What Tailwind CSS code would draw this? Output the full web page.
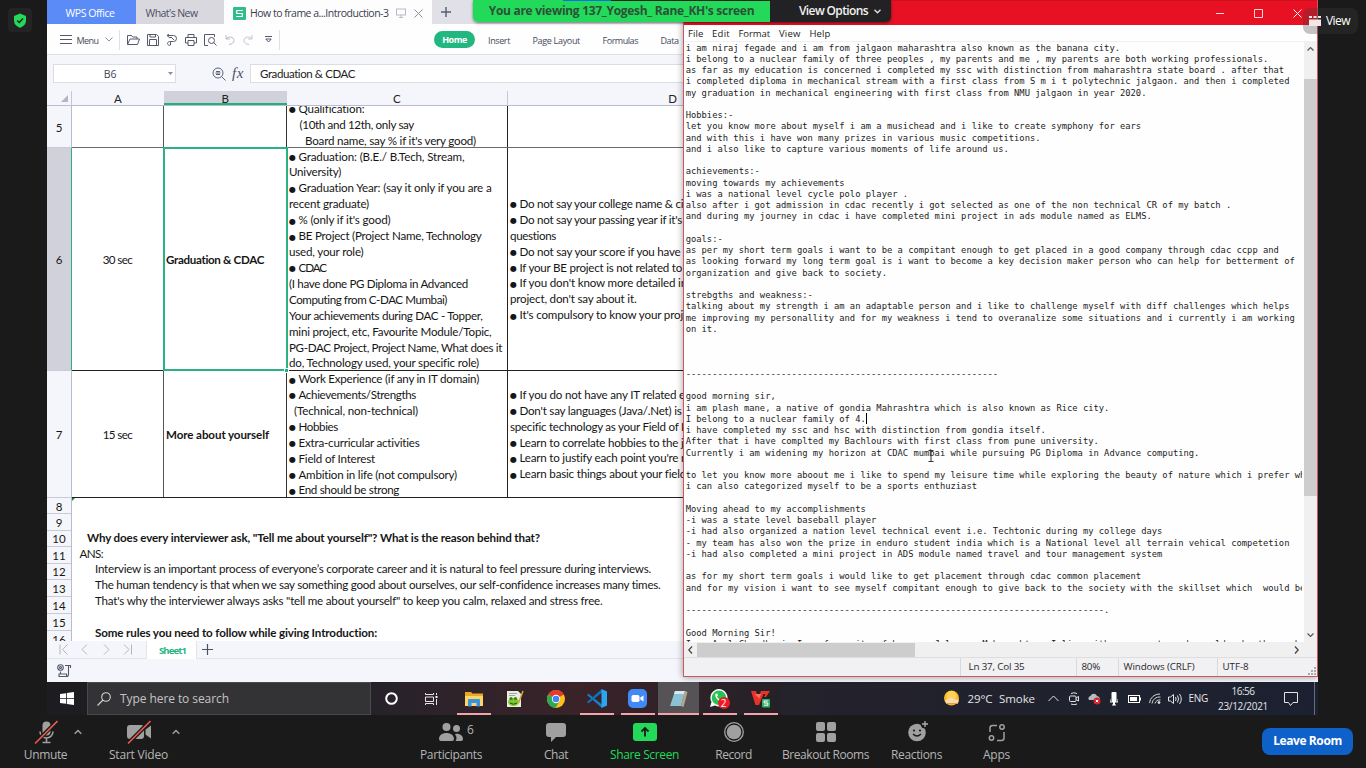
<!DOCTYPE html>
<html lang="en">
<head>
<meta charset="utf-8">
<title>Shared screen</title>
<script src="https://cdn.jsdelivr.net/npm/@tailwindcss/browser@4"></script>
</head>
<body class="w-[1366px] h-[768px] overflow-hidden bg-[#1a1a1a] font-['Open_Sans','Noto_Sans',sans-serif] flex flex-col">

<main class="relative flex h-[715px] shrink-0">
  <aside class="w-[47px] shrink-0 pt-2 pl-2">
    <div class="w-6 h-6 rounded bg-[#232323] flex items-center justify-center">
      <svg width="14" height="15" viewBox="0 0 14 15"><path d="M7 .5 13 3v4.500C13 11 10.500 13.500 7 14.800 3.500 13.500 1 11 1 7.500V3z" fill="#23d959"/><path d="M4.200 7.500 6.300 9.500 10 5.500" fill="none" stroke="#1a1a1a" stroke-width="1.400"/></svg>
    </div>
  </aside>

  <!-- shared desktop -->
  <section class="relative w-[1271px] h-[715px] shrink-0 overflow-hidden flex flex-col bg-[#dcdbe2]">

    <!-- spreadsheet window -->
    <div class="h-[682px] shrink-0 flex flex-col bg-[#f5f6fb] overflow-hidden">
      <div class="flex h-6 shrink-0 bg-[#e1e0e7] text-[10.500px] text-[#4b4f63]">
        <div class="w-[89px] bg-[#5b8bf7] text-white flex items-center pl-[18.500px] pt-[3px]"><span data-w="49">WPS Office</span></div>
        <div class="w-[88px] bg-[#dad8df] flex items-center pl-[9.500px] pt-[3px]"><span data-w="52">What's New</span></div>
        <div class="w-[208px] bg-[#fdfdfe] flex items-center pl-[9px] pt-0.5 text-[#3a3d4d]">
          <svg width="13" height="13" viewBox="0 0 13 13" class="shrink-0"><rect width="13" height="13" rx="1" fill="#2fbd8b"/><path d="M9.800 3.500H3.800v3h5.500v3H3.200" fill="none" stroke="#fff" stroke-width="1.200"/></svg>
          <span class="ml-1 pt-px" data-w="138.500">How to frame a...Introduction-3</span>
          <svg class="ml-[7.500px] shrink-0" width="10" height="10" viewBox="0 0 10 10" fill="none" stroke="#b7bac8"><rect x=".5" y="1" width="9" height="6"/><path d="M5 7v2M3 9.500h4"/></svg>
          <svg class="ml-2 shrink-0" width="9" height="9" viewBox="0 0 9 9" stroke="#8a8ea0"><path d="m.5.5 8 8m0-8-8 8"/></svg>
        </div>
        <div class="pl-[9px] flex items-center"><svg width="10" height="10" viewBox="0 0 10 10" stroke="#555d75" stroke-width="1.400"><path d="M5 0v10M0 5h10"/></svg></div>
      </div>

      <div class="flex items-center h-[31px] shrink-0 bg-[#fefefe] border-b border-[#dfe0e6] text-[9px] text-[#454a5c] pl-[13px] pt-px">
        <svg width="12" height="9" viewBox="0 0 12 9" stroke="#555a6b"><path d="M0 .5h12M0 4.500h12M0 8.500h12"/></svg>
        <span class="ml-[4.500px] pt-0.5" data-w="22">Menu</span>
        <svg class="ml-1.5" width="8" height="5" viewBox="0 0 8 5" fill="none" stroke="#8a8fa0"><path d="m.5.5 3.500 3.500L7.500.5"/></svg>
        <span class="ml-[6.500px] w-px h-5 bg-[#dfe0e6]"></span>
        <div class="ml-[7px] flex items-center gap-[7px]">
          <svg width="13" height="12" viewBox="0 0 13 12" fill="none" stroke="#555a6b"><path d="M.5 10.500v-9h4l1.200 1.500H10v2M.5 10.500 3 5h9.500l-2 5.500z"/></svg>
          <svg width="12" height="12" viewBox="0 0 12 12" fill="none" stroke="#555a6b"><path d="M.5.5h9l2 2v9H.5zM3 .5v2.500h5.500V.5M2.500 11.500v-6h7v6"/></svg>
          <svg width="12" height="12" viewBox="0 0 12 12" fill="none" stroke="#555a6b"><path d="M1 1.500h6.500a3 3 0 0 1 0 6H4.500V11a2 2 0 0 1-3-1.500C1.500 8 3 7.500 4.500 7.500M3 0l-2 1.500L4 4l1-1 3 3"/></svg>
          <svg width="12" height="12" viewBox="0 0 12 12" fill="none" stroke="#555a6b"><path d="M3 3.500v-3h6v3M3 9H.5V3.500h11V9H9M3 6.500h6v5H3z"/></svg>
          <svg width="13" height="12" viewBox="0 0 13 12" fill="none" stroke="#555a6b"><path d="M4 11.500H.5V.5h10v2.500"/><circle cx="7.500" cy="6.500" r="3"/><path d="m9.500 8.500 3 3"/></svg>
          <svg class="ml-px" width="10" height="10" viewBox="0 0 10 10" fill="none" stroke="#b9bcc8"><path d="M1 0v4h4M1 4c2-3 8-2.500 8 1.500C9 8 7 9 4 9.500"/></svg>
          <svg class="ml-px" width="10" height="10" viewBox="0 0 10 10" fill="none" stroke="#c4c7d1"><path d="M9 0v4H5M9 4C7 1 1 1.500 1 5.500 1 8 3 9 6 9.500"/></svg>
        </div>
        <svg class="ml-[12px]" width="7" height="7" viewBox="0 0 7 7" fill="none" stroke="#555a6b"><path d="M0 .5h7M.8 3l2.700 3 2.700-3z"/></svg>
        <span class="ml-[7px] w-px h-5 bg-[#dfe0e6]"></span>
        <div class="ml-[154px] w-[41px] h-[17px] rounded-full bg-[#22b781] text-white font-bold flex items-center justify-center"><span class="pt-px" data-w="24.500">Home</span></div>
        <span class="ml-[13px] pt-0.5" data-w="22">Insert</span>
        <span class="ml-[22.500px] pt-0.5" data-w="47.500">Page Layout</span>
        <span class="ml-[22.500px] pt-0.5" data-w="35.500">Formulas</span>
        <span class="ml-[22.500px] pt-0.5" data-w="18">Data</span>
      </div>

      <div class="flex items-center h-[36px] shrink-0 pl-1.5 pt-px">
        <div class="relative w-[123px] h-[19px] bg-white border border-[#dcdde4] flex items-center justify-center text-[10.500px] text-[#3f4455] pr-[9px] pt-[3px]">
          <span data-w="12.500">B6</span>
          <svg class="absolute right-[2px] top-[7px]" width="5" height="3"><path d="M0 0h5L2.500 3z" fill="#8a8fa0"/></svg>
        </div>
        <svg class="ml-[36px]" width="14" height="14" viewBox="0 0 14 14" fill="none" stroke="#5b6072"><circle cx="6" cy="6" r="5"/><path d="m9.500 9.500 4 4M3.500 6h5M4 4.500h4M4 7.500h4" /></svg>
        <span class="ml-1.5 font-['Liberation_Serif',serif] italic text-[15px] leading-none text-[#4b5062]" data-w="12">fx</span>
        <div class="ml-[6px] w-[440px] h-[19px] bg-white border border-[#dcdde4] flex items-center pl-[9px] pt-px font-[Lato,sans-serif] text-[11.500px] text-[#222]"><span data-w="95">Graduation &amp; CDAC</span></div>
      </div>

      <!-- column letters -->
      <div class="flex h-[15px] shrink-0 border-b border-[#b9bcd0] font-[Lato,sans-serif] text-[11.500px] leading-[15px] text-[#222] text-center">
        <div class="w-[25px] border-r border-[#c4c7d6] flex justify-end items-center pr-[3px]"><svg width="7" height="7"><path d="M7 0v7H0z" fill="#b4b6bd"/></svg></div>
        <div class="w-[92px]">A</div>
        <div class="w-[122.500px] bg-[#d0d1da] border-b-2 border-[#22b07d]">B</div>
        <div class="w-[221.500px] border-r border-[#c4c7d6]">C</div>
        <div class="w-[329px]">D</div>
      </div>

      <!-- grid -->
      <div class="relative flex h-[535px] shrink-0 overflow-hidden font-[Lato,sans-serif] text-[11.600px] leading-[15.920px] text-[#161616] [&_p]:w-max [&_p]:whitespace-pre [&_b]:inline-block [&_b]:w-[9.500px] [&_b]:text-[8px] [&_b]:font-normal [&_b]:align-[0.500px] [&_b]:font-['DejaVu_Sans',sans-serif] [&_b]:leading-none">
        <div class="w-[25px] shrink-0 flex flex-col border-r border-[#b9bcd0] text-center text-[11.500px] [&>div]:flex [&>div]:items-center [&>div]:justify-center [&>div]:border-b [&>div]:border-[#c9cbd8] [&>div]:shrink-0">
          <div class="h-[42px] pt-[3px]">5</div>
          <div class="h-[223px] pt-0.5 bg-[#d0d1da]">6</div>
          <div class="h-[127px] pt-0.5">7</div>
          <div class="h-[16px] pt-0.5">8</div>
          <div class="h-[16.500px] pt-0.5">9</div>
          <div class="h-[16.500px] pt-0.5">10</div>
          <div class="h-[16.500px] pt-0.5">11</div>
          <div class="h-[16.500px] pt-0.5">12</div>
          <div class="h-[17px] pt-0.5">13</div>
          <div class="h-[17px] pt-0.5">14</div>
          <div class="h-[17px] pt-0.5">15</div>
          <div class="h-[17px] pt-0.5">16</div>
        </div>
        <div class="w-[1246px] shrink-0 bg-white flex flex-col">
          <div class="flex h-[42px] shrink-0 border-b border-[#6b6b6b]">
            <div class="w-[92px] border-r border-[#555]"></div>
            <div class="w-[123px] border-r border-[#333]"></div>
            <div class="w-[221px] border-r border-[#222] flex flex-col justify-end pl-[2px] overflow-hidden">
              <p data-w="75.500"><b>●</b>Qualification:</p>
              <p class="ml-[10.500px]" data-w="114.500">(10th and 12th, only say</p>
              <p class="ml-[16px] -mb-[1.600px]" data-w="171">Board name, say % if it's very good)</p>
            </div>
          </div>
          <div class="flex h-[223px] shrink-0 border-b border-[#222]">
            <div class="w-[92px] border-r border-[#555] flex items-center justify-center pt-px"><p data-w="29.500">30 sec</p></div>
            <div class="relative w-[123px] border-r border-[#333] flex items-center pl-[2px] pt-px font-bold">
              <p data-w="98">Graduation &amp; CDAC</p>
              <div class="absolute -left-[1.500px] -top-px w-[125px] h-[224px] border-2 border-[#2bb184]"></div>
              <div class="absolute -right-[2px] -bottom-[2px] w-[3px] h-[3px] bg-[#22b07d] outline outline-white"></div>
            </div>
            <div class="w-[221px] border-r border-[#222] pl-[2px] pt-[0.500px] overflow-hidden">
              <p data-w="175.500"><b>●</b>Graduation: (B.E./ B.Tech, Stream,</p>
              <p data-w="52">University)</p>
              <p data-w="202.500"><b>●</b>Graduation Year: (say it only if you are a</p>
              <p data-w="80">recent graduate)</p>
              <p data-w="101.500"><b>●</b>% (only if it's good)</p>
              <p data-w="192.500"><b>●</b>BE Project (Project Name, Technology</p>
              <p data-w="74.500">used, your role)</p>
              <p data-w="37"><b>●</b>CDAC</p>
              <p data-w="179">(I have done PG Diploma in Advanced</p>
              <p data-w="158">Computing from C-DAC Mumbai)</p>
              <p data-w="193.500">Your achievements during DAC - Topper,</p>
              <p data-w="202.500">mini project, etc, Favourite Module/Topic,</p>
              <p data-w="213">PG-DAC Project, Project Name, What does it</p>
              <p data-w="190">do, Technology used, your specific role)</p>
            </div>
            <div class="w-[400px] pl-[2px] flex flex-col justify-center pt-px">
              <p data-w="183"><b>●</b>Do not say your college name &amp; city</p>
              <p data-w="172"><b>●</b>Do not say your passing year if it's</p>
              <p data-w="46">questions</p>
              <p data-w="170.500"><b>●</b>Do not say your score if you have</p>
              <p data-w="172"><b>●</b>If your BE project is not related to</p>
              <p data-w="177"><b>●</b>If you don't know more detailed in</p>
              <p data-w="126.500">project, don't say about it.</p>
              <p data-w="173"><b>●</b>It's compulsory to know your proj</p>
            </div>
          </div>
          <div class="flex h-[127px] shrink-0 border-b border-[#222]">
            <div class="w-[92px] border-r border-[#555] flex items-center justify-center pt-px"><p data-w="29.500">15 sec</p></div>
            <div class="w-[123px] border-r border-[#333] flex items-center pl-[2px] pt-px font-bold"><p data-w="103">More about yourself</p></div>
            <div class="w-[221px] border-r border-[#222] pl-[2px] overflow-hidden">
              <p data-w="190"><b>●</b>Work Experience (if any in IT domain)</p>
              <p data-w="127"><b>●</b>Achievements/Strengths</p>
              <p class="ml-[5px]" data-w="124">(Technical, non-technical)</p>
              <p data-w="49"><b>●</b>Hobbies</p>
              <p data-w="130.500"><b>●</b>Extra-curricular activities</p>
              <p data-w="86"><b>●</b>Field of Interest</p>
              <p data-w="168"><b>●</b>Ambition in life (not compulsory)</p>
              <p data-w="110"><b>●</b>End should be strong</p>
            </div>
            <div class="w-[400px] pl-[2px] flex flex-col justify-center pt-px">
              <p data-w="175"><b>●</b>If you do not have any IT related e</p>
              <p data-w="171.500"><b>●</b>Don't say languages (Java/.Net) is</p>
              <p data-w="174">specific technology as your Field of I</p>
              <p data-w="173.500"><b>●</b>Learn to correlate hobbies to the j</p>
              <p data-w="175"><b>●</b>Learn to justify each point you're r</p>
              <p data-w="176"><b>●</b>Learn basic things about your field</p>
            </div>
          </div>
          <div class="pt-[31.600px]">
            <p class="font-bold ml-[15px]" data-w="453">Why does every interviewer ask, "Tell me about yourself"? What is the reason behind that?</p>
            <p class="ml-[7.500px]" data-w="23.500">ANS:</p>
            <p class="ml-[23px]" data-w="556">Interview is an important process of everyone’s corporate career and it is natural to feel pressure during interviews.</p>
            <p class="ml-[23px]" data-w="565.500">The human tendency is that when we say something good about ourselves, our self-confidence increases many times.</p>
            <p class="ml-[23px]" data-w="507.500">That's why the interviewer always asks "tell me about yourself" to keep you calm, relaxed and stress free.</p>
            <p class="ml-[23px] mt-[15.600px] font-bold" data-w="282">Some rules you need to follow while giving Introduction:</p>
          </div>
        </div>
        <svg class="absolute left-[25px] top-[392px]" width="3" height="3"><path d="M0 0h3L0 3z" fill="#178a2b"/></svg>
        <div class="absolute left-[24px] top-[42px] w-px h-[222px] bg-[#2bb184]"></div>
      </div>

      <!-- sheet tabs -->
      <div class="flex h-[18px] shrink-0 items-center bg-[#f5f6fb] border-b border-[#e3e4ea] pl-3">
        <svg width="74" height="11" viewBox="0 0 74 11" fill="none" stroke="#b3b6c2"><path d="M1 .5v10M8.500.5l-5 5 5 5M28 .5l-5 5 5 5M45 .5l5 5-5 5M65 .5l5 5-5 5M72.500.5v10"/></svg>
        <div class="ml-[12.500px] w-[51px] h-[18px] bg-white border-x border-[#e3e4ea] flex items-center justify-center pt-[4px] pl-[3px] text-[9.500px] font-bold text-[#22b781]"><span data-w="27">Sheet1</span></div>
        <svg class="ml-[5px]" width="11" height="11" stroke="#4b5062" stroke-width="1.200"><path d="M5.500 0v11M0 5.500h11"/></svg>
      </div>
      <div class="flex h-[23px] shrink-0 items-center pl-[10px]">
        <svg width="15" height="14" viewBox="0 0 15 14" fill="none" stroke="#555a6b" stroke-width="1.100"><circle cx="3.500" cy="3.500" r="2.800"/><circle cx="3.500" cy="3.500" r="1"/><path d="M8 1.500h5.500v2.500M11.500 1.500v9q0 2-2 2H2v-2.500h7.500V12M3.500 7.500V10"/></svg>
      </div>
    </div>

    <!-- Windows taskbar -->
    <div class="flex h-[33px] shrink-0 bg-linear-to-r from-[#1c1c21] via-[#26222a] to-[#1b2131] text-[#e4e4e6]">
      <div class="w-[40px] flex items-center justify-center"><svg width="14" height="13" viewBox="0 0 14 13" fill="#fff"><path d="M0 2 6 1.200V6H0zM6.800 1 14 0v6H6.800zM0 6.800h6v5L0 11zM6.800 6.800H14V13l-7.200-1z"/></svg></div>
      <div class="w-[284px] bg-[#333335] border border-[#4a4a4c] flex items-center pl-[9px] text-[12px] text-[#c4c4c6]">
        <svg width="14" height="14" viewBox="0 0 14 14" fill="none" stroke="#d4d4d6" stroke-width="1.100"><circle cx="9" cy="5" r="4.300"/><path d="M6 8 .5 13.500"/></svg>
        <span class="ml-[9px]" data-w="109">Type here to search</span>
      </div>
      <div class="flex [&>div]:w-[41px] [&>div]:h-[33px] [&>div]:flex [&>div]:items-center [&>div]:justify-center [&>div]:relative bg-linear-to-r from-[#26222a] via-[#3a2329] to-[#242127]">
        <div><svg width="13" height="13"><circle cx="6.500" cy="6.500" r="5.300" fill="none" stroke="#fff" stroke-width="2"/></svg></div>
        <div class="pr-0.5"><svg width="15" height="12" viewBox="0 0 15 12" fill="none" stroke="#e4e4e6"><path d="M1.500 0v1.500h8V0M1.500 4h8v4.500h-8zM1.500 12v-1.500h8V12M12.500 0v2M12.500 6v6"/><rect x="11.500" y="3" width="2" height="2" fill="#fff" stroke="none"/></svg></div>
        <div><svg width="18" height="16" viewBox="0 0 18 16"><path d="M0 1h6l1.500 1.500H18V15H0z" fill="#e9a820"/><path d="M0 5h18v10H0z" fill="#fcd66b"/><path d="M3 15.500V9q0-1 1-1h10q1 0 1 1v6.500h-3.500V12h-5v3.500z" fill="#3a93e0"/></svg><i class="absolute bottom-0 left-[4px] w-[34px] h-[2px] bg-[#f3a3ab]"></i></div>
        <div><svg width="18" height="18" viewBox="0 0 18 18"><path d="M1 1h11l3 3v13H1z" fill="#e9efdf"/><path d="M3 3.500h8M3 5.500h6" stroke="#9aa"/><ellipse cx="7.500" cy="12" rx="5.500" ry="4" fill="#7dc82f"/><circle cx="5" cy="8.500" r="1.600" fill="#3f7d18"/><circle cx="9.500" cy="8.500" r="1.600" fill="#3f7d18"/><path d="M4 13q3.500 2.500 7 0" stroke="#265010" fill="none"/><path d="m17 1-4.500 12" stroke="#d9a43a" stroke-width="1.600"/></svg></div>
        <div><svg width="18" height="18" viewBox="0 0 18 18"><circle cx="9" cy="9" r="9" fill="#fbc116"/><path d="M9 9 1.200 4.500A9 9 0 0 1 16.800 4.500z" fill="#e33b2e"/><path d="M9 9 1.200 4.500A9 9 0 0 0 8.500 18L12.500 11z" fill="#2da94f"/><path d="M9 5h8.100a9 9 0 0 0-.3-.5H9z" fill="#e33b2e"/><circle cx="9" cy="9" r="4.200" fill="#fff"/><circle cx="9" cy="9" r="3.300" fill="#4285f4"/></svg></div>
        <div><svg width="20" height="19" viewBox="0 0 20 19"><path d="m0 6 1.500-1.200L15 15.500v3.500z" fill="#1380cf"/><path d="m0 13 1.500 1.200L15 3.500V0z" fill="#0d73bf"/><path d="m14.500 0 5.500 2.500v14L14.500 19z" fill="#2ba5ee"/></svg><i class="absolute bottom-0 left-[4px] w-[34px] h-[2px] bg-[#f3a3ab]"></i></div>
        <div><svg width="19" height="19" viewBox="0 0 19 19"><rect width="19" height="19" rx="5" fill="#4289f5"/><rect x="3.500" y="6" width="8" height="7" rx="1.800" fill="#fff"/><path d="m12.300 8.500 3.200-2v6l-3.200-2z" fill="#fff"/></svg><i class="absolute bottom-0 left-[4px] w-[34px] h-[2px] bg-[#f3a3ab]"></i></div>
        <div class="bg-[#555356]"><svg width="19" height="18" viewBox="0 0 19 18"><path d="M6 1h10L12 16H1z" fill="#8cc3d4"/><path d="M6 1h10l-1 3H5z" fill="#d7e9ee"/><path d="m16 1 2.500 1L14.500 17 12 16z" fill="#b9a58a"/></svg><i class="absolute bottom-0 left-0 w-[41px] h-[2px] bg-[#f3a3ab]"></i></div>
        <div><svg width="20" height="20" viewBox="0 0 20 20"><path d="M9 0a8.700 8.700 0 1 1-4 16.500L0 18l1.500-5A8.700 8.700 0 0 1 9 0z" fill="#fff"/><circle cx="9" cy="8.800" r="7.300" fill="#27c155"/><path d="M6 4.500c-1.500 1-.5 4 1.500 6s4 3 5.500 2l.3-1.500-2-1.200-1 1C9 10.500 7.500 9 7 7.500l1-1L7.300 4.500z" fill="#fff"/><circle cx="14" cy="14" r="6" fill="#ed1c24"/></svg><span class="absolute left-[18.500px] top-[13.500px] w-[12px] text-center text-[10px] leading-[14px] text-white">2</span><i class="absolute bottom-0 left-[4px] w-[34px] h-[2px] bg-[#f3a3ab]"></i></div>
        <div><svg width="19" height="18" viewBox="0 0 19 18"><path d="M0 1h5l2 8 3-8h9l-4 6h-2l1.500-3h-2L8 15H4.500z" fill="#e8332a"/><path d="M4 4h6l-2 5z" fill="#ff6d5e"/><rect x="11" y="9" width="8" height="8.500" rx="1" fill="#35b26a"/><path d="M16.800 11h-3.600v2h3.600v2.200h-3.800" fill="none" stroke="#fff"/></svg><i class="absolute bottom-0 left-[4px] w-[34px] h-[2px] bg-[#f3a3ab]"></i></div>
      </div>
      <div class="flex items-center ml-[162px] text-[11.500px] shrink-0">
        <svg width="17" height="17" viewBox="0 0 17 17"><circle cx="8.500" cy="8" r="7.500" fill="#f9b824"/><circle cx="8.500" cy="6" r="5" fill="#fdd257"/><path d="M2 12a3 3 0 0 1 4-3q3-2.500 5 .5h4.500q1 3-2 4H5z" fill="#f5ddb0"/><path d="M3 13.500h12" stroke="#e99a3a"/></svg>
        <span class="ml-[7.500px] pt-px" data-w="25">29°C</span><span class="ml-[6.500px] pt-px" data-w="36">Smoke</span>
        <svg class="ml-[13px]" width="11" height="7" viewBox="0 0 11 7" fill="none" stroke="#e4e4e6"><path d="M.5 6 5.500 1l5 5"/></svg>
        <svg class="ml-[10px]" width="11" height="13" viewBox="0 0 11 13" fill="none" stroke="#e4e4e6"><rect x=".5" y="4" width="6.500" height="5.500" rx="1"/><path d="m7 6 2.500-1.500v4.500L7 7.500M2 1.500q3-1.500 6 0M2 12q3 1.500 6 0"/></svg>
        <svg class="ml-2" width="13" height="13" viewBox="0 0 13 13"><path d="M1 8a2.500 2.500 0 0 1 1.500-4 3.500 3.500 0 0 1 6.500 0q3 .5 3 4z" fill="#b9bac0"/><circle cx="9" cy="9" r="3.500" fill="#d5222e"/><path d="m7.800 7.800 2.400 2.400m0-2.400-2.400 2.400" stroke="#fff"/></svg>
        <svg class="ml-[9px]" width="8" height="14" viewBox="0 0 8 14"><rect x="1.500" width="5" height="10" rx="1" fill="#fff"/><path d="M0 7v3h3.500v3M8 7v3H4.500v3M2 13h4" fill="none" stroke="#fff"/></svg>
        <svg class="ml-[10px]" width="13" height="8" viewBox="0 0 13 8"><rect x=".5" y=".5" width="11" height="7" fill="none" stroke="#fff"/><path d="M2 2h7v4H2zM12 2.500h1v3h-1z" fill="#fff"/></svg>
        <svg class="ml-[8px]" width="12" height="11" viewBox="0 0 12 11" fill="none" stroke="#d4d4d8"><path d="M.5 10A10 10 0 0 1 11 1M3 10.500A7.500 7.500 0 0 1 11.500 4M6 10.500A5 5 0 0 1 11.500 7"/><circle cx="10" cy="9.500" r="1" fill="#fff"/></svg>
        <svg class="ml-[6.500px]" width="14" height="12" viewBox="0 0 14 12" fill="none" stroke="#e4e4e6"><path d="M.5 4h2L5.500 1.500v9L2.500 8h-2zM7.500 4q1.200 2 0 4M9.500 2.500q2 3.500 0 7M11.500 1q3.500 5 0 10"/></svg>
        <span class="ml-[7px] text-[10px]" data-w="19.500">ENG</span>
        <div class="ml-[10px] flex flex-col items-center text-[10px] leading-[15px]"><span data-w="23">16:56</span><span data-w="50">23/12/2021</span></div>
        <svg class="ml-[15.500px]" width="14" height="14" viewBox="0 0 14 14" fill="none" stroke="#e4e4e6"><path d="M.5.5h13v10H9l-2.500 3-2-3h-4z"/></svg>
      </div>
      <div class="ml-auto mr-[3px] w-px bg-[#6b6e78]"></div>
    </div>

    <!-- Notepad window -->
    <div class="absolute left-[635.500px] top-0 w-[635.500px] h-[677px] border-x border-b border-[#cf5560] bg-[#fefefe] shadow-[0_0_7px_rgba(0,0,0,.4)] flex flex-col">
      <div class="h-[25px] shrink-0 bg-[#e81123] border-t border-[#cf1020] flex items-center justify-end pr-[15px] gap-[30px]">
        <svg width="8" height="9"><path d="M0 4.500h8" stroke="#fbd5d8"/></svg>
        <svg width="9" height="9"><path d="M.5.5h8v8h-8z" fill="none" stroke="#fbd5d8"/></svg>
        <svg width="9" height="9"><path d="m.5.5 8 8m0-8-8 8" stroke="#fff"/></svg>
      </div>
      <div class="h-[17px] shrink-0 flex items-center pl-[4.500px] pt-0.5 text-[9.500px] text-[#222] border-b border-[#f0f0f0]">
        <span data-w="15.500">File</span><span class="ml-[8.500px]" data-w="18">Edit</span><span class="ml-[8.500px]" data-w="31.500">Format</span><span class="ml-[9px]" data-w="21.500">View</span><span class="ml-[9px]" data-w="21">Help</span>
      </div>
      <div class="flex h-[600px] shrink-0">
        <div class="relative w-[618px] mr-[2.500px] shrink-0 overflow-hidden">
<pre class="pl-[2.200px] pt-[0.500px] font-['DejaVu_Sans_Mono',monospace] text-[8.800px] leading-[11.250px] text-[#1c1c1c]">i am niraj fegade and i am from jalgaon maharashtra also known as the banana city.
i belong to a nuclear family of three peoples , my parents and me , my parents are both working professionals.
as far as my education is concerned i completed my ssc with distinction from maharashtra state board . after that
i completed diploma in mechanical stream with a first class from S m i t polytechnic jalgaon. and then i completed
my graduation in mechanical engineering with first class from NMU jalgaon in year 2020.

Hobbies:-
let you know more about myself i am a musichead and i like to create symphony for ears
and with this i have won many prizes in various music competitions.
and i also like to capture various moments of life around us.

achievements:-
moving towards my achievements
i was a national level cycle polo player .
also after i got admission in cdac recently i got selected as one of the non technical CR of my batch .
and during my journey in cdac i have completed mini project in ads module named as ELMS.

goals:-
as per my short term goals i want to be a compitant enough to get placed in a good company through cdac ccpp and
as looking forward my long term goal is i want to become a key decision maker person who can help for betterment of
organization and give back to society.

strebgths and weakness:-
talking about my strength i am an adaptable person and i like to challenge myself with diff challenges which helps
me improving my personallity and for my weakness i tend to overanalize some situations and i currently i am working
on it.



-----------------------------------------------------------

good morning sir,
i am plash mane, a native of gondia Mahrashtra which is also known as Rice city.
I belong to a nuclear family of 4.
i have completed my ssc and hsc with distinction from gondia itself.
After that i have complted my Bachlours with first class from pune university.
Currently i am widening my horizon at CDAC mumbai while pursuing PG Diploma in Advance computing.

to let you know more aboout me i like to spend my leisure time while exploring the beauty of nature which i prefer wh
i can also categorized myself to be a sports enthuziast

Moving ahead to my accomplishments
-i was a state level baseball player
-i had also organized a nation level technical event i.e. Techtonic during my college days
- my team has also won the prize in enduro student india which is a National level all terrain vehical competetion
-i had also completed a mini project in ADS module named travel and tour management system

as for my short term goals i would like to get placement through cdac common placement
and for my vision i want to see myself compitant enough to give back to the society with the skillset which  would be

-------------------------------------------------------------------------------.

Good Morning Sir!
I am Amol Chaudhari. I am from city of bananas Jalgaon, Maharashtra. I live with my parents and an elder brother, wh</pre>
          <div class="absolute left-[182px] top-[371px] w-px h-[11px] bg-black"></div>
          <svg class="absolute left-[244px] top-[408px]" width="6" height="12" fill="none" stroke="#333"><path d="M.5.5h5M3 .5v11M.5 11.500h5"/></svg>
        </div>
        <div class="w-[13px] shrink-0 bg-[#f0f0f0] flex flex-col items-center">
          <svg class="mt-1 shrink-0" width="7" height="6" fill="none" stroke="#555" stroke-width="1.200"><path d="m.5 4.500 3-3 3 3"/></svg>
          <div class="mt-[27px] w-full h-[417px] shrink-0 bg-[#cdcdcd]"></div>
          <svg class="mt-auto mb-1 shrink-0" width="7" height="6" fill="none" stroke="#555" stroke-width="1.200"><path d="m.5 1.500 3 3 3-3"/></svg>
        </div>
      </div>
      <div class="h-[15px] shrink-0 bg-[#f0f0f0] flex items-center pl-1">
        <svg width="5" height="8" fill="none" stroke="#444" stroke-width="1.300"><path d="M4 .5.8 4 4 7.500"/></svg>
        <div class="ml-[4px] w-[218px] h-[14px] bg-[#cdcdcd]"></div>
        <svg class="ml-auto mr-[18px]" width="5" height="8" fill="none" stroke="#444" stroke-width="1.300"><path d="M1 .5 4.200 4 1 7.500"/></svg>
      </div>
      <div class="relative grow bg-[#f1f0f2] border-t border-[#dedede] flex items-stretch text-[9.800px] text-[#2a2a2a] [&>div]:border-l [&>div]:border-[#d9d9d9] [&>div]:flex [&>div]:items-center [&>div]:pt-px">
        <div class="ml-[276px] w-[116px] pl-[8px]"><span data-w="56">Ln 37, Col 35</span></div>
        <div class="w-[42px] pl-[5px]"><span data-w="18.500">80%</span></div>
        <div class="w-[99px] pl-[5px]"><span data-w="71">Windows (CRLF)</span></div>
        <div class="w-[98px] pl-[5px]"><span data-w="26">UTF-8</span></div>
        <svg class="absolute right-[1px] bottom-[1px]" width="8" height="8" fill="#aaa"><path d="M6 0h2v2H6zM3 3h2v2H3zM6 3h2v2H6zM0 6h2v2H0zM3 6h2v2H3zM6 6h2v2H6z"/></svg>
      </div>
    </div>
  </section>

  <!-- meeting overlays -->
  <div class="absolute left-[473px] top-0 w-[418px] h-[22px] rounded-b-[5px] overflow-hidden flex shadow-[0_1px_3px_rgba(0,0,0,.5)] font-bold text-[12px]">
    <div class="w-[297px] bg-[#23d959] flex items-center justify-center text-[#2c5138]"><span data-w="265.500">You are viewing 137_Yogesh_ Rane_KH's screen</span></div>
    <div class="grow bg-[#222224] text-[#f2f2f2] flex items-center pl-[29px] font-semibold"><span data-w="69">View Options</span><svg class="ml-[6px]" width="7" height="5" fill="none" stroke="#ddd" stroke-width="1.400"><path d="m.5.7 3 3 3-3"/></svg></div>
    <div class="absolute left-[90px] top-0 w-[48px] h-px bg-[#0e71eb]"></div>
    <div class="absolute left-[138px] top-0 w-[280px] h-px bg-[#222]"></div>
  </div>
  <div class="absolute left-[1303px] top-[8px] w-[55px] h-[26px] rounded-[7px] bg-[#3c3c3c]/30 flex items-center pl-[6px] text-white text-[12px]">
    <svg width="12" height="12" viewBox="0 0 12 12" fill="#f3e6e6"><path d="M0 1h3v2H0zM4.500 1h3v2h-3zM9 1h3v2H9zM0 4.500h12V11H0z"/></svg>
    <span class="ml-[5px]" data-w="24">View</span>
  </div>
</main>

<!-- meeting controls -->
<footer class="relative flex h-[53px] shrink-0 text-[12px] text-[#b5b5b5] [&>div]:flex [&>div]:flex-col [&>div]:items-center [&>div]:shrink-0 [&>div>svg]:h-[26px] [&>div>svg]:mt-[5px] [&>div>span]:leading-[16px] [&>div>span]:mt-[1px]">
  <div class="w-[91px]"><svg width="24" viewBox="0 0 24 26"><rect x="8.500" y="1.500" width="8" height="14" rx="4" fill="#a0a0a0"/><path d="M6 11.500a6.500 6.500 0 0 0 13 0M12.500 18v4M8.500 22.500h8" fill="none" stroke="#a0a0a0" stroke-width="1.600"/><path d="M1 23 23.500 1" stroke="#1a1a1a" stroke-width="4"/><path d="M1 23.500 23.500 1" stroke="#ee5a52" stroke-width="1.600"/></svg><span data-w="43.500">Unmute</span></div>
  <div class="w-[95px]"><svg width="26" viewBox="0 0 26 26"><rect x="1" y="5" width="17" height="14" rx="3" fill="#a0a0a0"/><path d="m19.500 9.500 5.500-4v13l-5.500-4z" fill="#a0a0a0"/><path d="M2 23.500 24.500 1" stroke="#1a1a1a" stroke-width="4"/><path d="M2 23.500 24.500 1" stroke="#ee5a52" stroke-width="1.600"/></svg><span data-w="59">Start Video</span></div>
  <div class="ml-[215px] w-[100px] relative"><svg width="26" viewBox="0 0 26 26" fill="#a0a0a0"><circle cx="8.500" cy="7" r="4"/><circle cx="18.500" cy="8.500" r="3.500"/><path d="M1 19c0-8 15-8 15 0q0 2-2 2H3q-2 0-2-2zM17.500 21h5.500q2 0 2-1.800c0-4-4-6.500-8-5.200q2 2.500 1.300 5.500z"/></svg><span data-w="62">Participants</span><em class="absolute left-[66px] top-[7px] not-italic text-[12px] leading-4">6</em></div>
  <div class="w-[110px]"><svg width="22" viewBox="0 0 22 26"><path d="M4 3h14q3 0 3 3v8q0 3-3 3h-7l-5 5v-5H4q-3 0-3-3V6q0-3 3-3z" fill="#a0a0a0"/></svg><span data-w="24">Chat</span></div>
  <div class="w-[67px] text-[#23d959]"><svg width="24" viewBox="0 0 24 26"><rect y="3" width="24" height="18" rx="3" fill="#23d959"/><path d="M12 16.500V8.500M8.500 11.500 12 8l3.500 3.500" fill="none" stroke="#1a1a1a" stroke-width="1.800"/></svg><span data-w="69">Share Screen</span></div>
  <div class="w-[111px]"><svg width="22" viewBox="0 0 22 26"><circle cx="11" cy="12" r="9.300" fill="none" stroke="#a0a0a0" stroke-width="1.300"/><circle cx="11" cy="12" r="7.300" fill="#a0a0a0"/></svg><span data-w="36.500">Record</span></div>
  <div class="w-[73px]"><svg width="22" viewBox="0 0 22 26" fill="#a0a0a0"><rect x="1" y="2" width="9" height="9" rx="2"/><rect x="12" y="2" width="9" height="9" rx="2"/><rect x="1" y="13" width="9" height="9" rx="2"/><rect x="12" y="13" width="9" height="9" rx="2"/></svg><span data-w="87">Breakout Rooms</span></div>
  <div class="w-[109px]"><svg width="24" viewBox="0 0 24 26"><circle cx="12" cy="12.500" r="8.800" fill="#a0a0a0"/><circle cx="20" cy="4" r="4.500" fill="#1a1a1a"/><path d="M20 1v6M17 4h6" stroke="#b0b0b0" stroke-width="1.300"/><circle cx="9" cy="10.500" r="1.100" fill="#1a1a1a"/><circle cx="15" cy="10.500" r="1.100" fill="#1a1a1a"/><path d="M8 14q4 4 8 0" fill="none" stroke="#1a1a1a" stroke-width="1.400"/></svg><span data-w="51">Reactions</span></div>
  <div class="w-[51px]"><svg width="18" viewBox="0 0 18 26" fill="none" stroke="#a0a0a0" stroke-width="1.500"><path d="M2 12V8q0-2.500 2.500-2.500H9M16 12v6q0 2.500-2.500 2.500H9"/><circle cx="14" cy="7" r="2.200"/><circle cx="3.500" cy="18" r="2.200"/></svg><span data-w="27">Apps</span></div>
  <svg class="absolute left-[74px] top-[14px]" width="8" height="6" fill="none" stroke="#a0a0a0" stroke-width="1.500"><path d="m.7 4.700 3.300-3.200 3.300 3.200"/></svg>
  <svg class="absolute left-[172px] top-[14px]" width="8" height="6" fill="none" stroke="#a0a0a0" stroke-width="1.500"><path d="m.7 4.700 3.300-3.200 3.300 3.200"/></svg>
  <button class="ml-auto mr-[13px] mt-[13px] w-[91px] h-[27px] rounded-[8px] bg-[#0e61c8] text-white font-bold text-[12px] flex items-center justify-center shrink-0 pb-px"><span data-w="68.500">Leave Room</span></button>
</footer>

<script>
// Tune letter spacing so each label takes the width given in data-w.
// Nothing is changed until the utility styles are in force.
function fitLabels() {
  if (getComputedStyle(document.querySelector('main')).display !== 'flex') return;
  document.querySelectorAll('[data-w]').forEach(function (el) {
    var target = parseFloat(el.dataset.w);
    var count = el.textContent.length;
    var spacing = 0;
    el.style.whiteSpace = 'pre';
    el.style.flexShrink = '0';
    el.style.letterSpacing = '0px';
    for (var i = 0; i < 3; i++) {
      spacing += (target - el.getBoundingClientRect().width) / count;
      el.style.letterSpacing = spacing + 'px';
    }
  });
}
fitLabels();
document.addEventListener('DOMContentLoaded', fitLabels);
window.addEventListener('load', fitLabels);
new MutationObserver(fitLabels).observe(document.head, { childList: true, subtree: true, characterData: true });
[30, 100, 300, 800].forEach(function (ms) { setTimeout(fitLabels, ms); });
</script>
</body>
</html>
